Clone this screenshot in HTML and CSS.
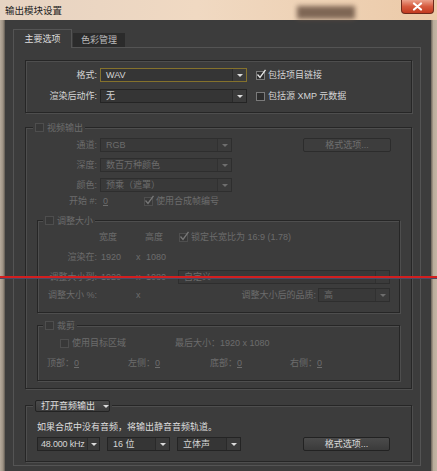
FILE: index.html
```html
<!DOCTYPE html>
<html>
<head>
<meta charset="utf-8">
<title>输出模块设置</title>
<link rel="stylesheet" href="styles.css">
</head>
<body>
<div class="titlebar">
  <span class="title">输出模块设置</span>
  <span class="smudge"></span>
  <span class="close"><svg width="11" height="9" viewBox="0 0 11 9"><path d="M2 1.5 L9 7.5 M9 1.5 L2 7.5" stroke="#fff" stroke-width="2.2" stroke-linecap="round"/></svg></span>
</div>
<div class="window">
  <div class="frame-l"></div>
  <div class="client">
    <div class="tabs">
      <div class="tab active">主要选项</div>
      <div class="tab">色彩管理</div>
    </div>
    <div class="panel">
      <div class="group g1">
        <div class="row">
          <span class="lbl l71">格式:</span>
          <div class="select focus s147"><span class="val">WAV</span><span class="drop"><i></i></span></div>
          <span class="chk ml9"><i class="box"><svg width="11" height="11" viewBox="0 0 11 11"><path d="M1.5 5.5 L4 8.5 L9.5 0.8" fill="none" stroke="#e8e8e8" stroke-width="1.3"/></svg></i>包括项目链接</span>
        </div>
        <div class="row mt7">
          <span class="lbl l71">渲染后动作:</span>
          <div class="select s147"><span class="val">无</span><span class="drop"><i></i></span></div>
          <span class="chk ml9"><i class="box"></i>包括源 XMP 元数据</span>
        </div>
      </div>

      <div class="group g2 dis">
        <div class="legend lg-v"><span class="chk"><i class="box"></i>视频输出</span></div>
        <div class="row mt5">
          <span class="lbl l71">通道:</span>
          <div class="select s132"><span class="val">RGB</span><span class="drop"><i></i></span></div>
          <div class="btn b88 ml71">格式选项...</div>
        </div>
        <div class="row mt6">
          <span class="lbl l71">深度:</span>
          <div class="select s132"><span class="val">数百万种颜色</span><span class="drop"><i></i></span></div>
        </div>
        <div class="row mt6">
          <span class="lbl l71">颜色:</span>
          <div class="select s132"><span class="val">预乘（遮罩）</span><span class="drop"><i></i></span></div>
        </div>
        <div class="row mt2">
          <span class="lbl l71">开始 #:</span>
          <span class="ul ml6">0</span>
          <span class="chk ml36"><i class="box"><svg width="11" height="11" viewBox="0 0 11 11"><path d="M1.5 5.5 L4 8.5 L9.5 0.8" fill="none" stroke="#787878" stroke-width="1.3"/></svg></i>使用合成帧编号</span>
        </div>

        <div class="group sub resize">
          <div class="legend lg-s"><span class="chk"><i class="box"></i>调整大小</span></div>
          <div class="row h12 mt5">
            <span class="hd ml61">宽度</span>
            <span class="hd ml28">高度</span>
            <span class="chk ml16"><i class="box"><svg width="11" height="11" viewBox="0 0 11 11"><path d="M1.5 5.5 L4 8.5 L9.5 0.8" fill="none" stroke="#787878" stroke-width="1.3"/></svg></i>锁定长宽比为 16:9 (1.78)</span>
          </div>
          <div class="row h12 mt8">
            <span class="lbl l59">渲染在:</span>
            <span class="n1">1920</span><span class="nx">x</span><span>1080</span>
          </div>
          <div class="row mt7 pr9">
            <span class="lbl l59">调整大小到:</span>
            <span class="n1">1920</span><span class="nx">x</span><span class="n2">1080</span>
            <div class="select grow"><span class="val">自定义</span><span class="drop"><i></i></span></div>
          </div>
          <div class="row mt4 pr9">
            <span class="lbl l59">调整大小 %:</span>
            <span class="n1"></span><span class="nx">x</span>
            <span class="lbl push">调整大小后的品质:</span>
            <div class="select s72 ml2"><span class="val">高</span><span class="drop"><i></i></span></div>
          </div>
        </div>

        <div class="group sub crop">
          <div class="legend lg-s"><span class="chk"><i class="box"></i>裁剪</span></div>
          <div class="row h12 mt6">
            <span class="chk ml22 w115"><i class="box"></i>使用目标区域</span>
            <span>最后大小：1920 x 1080</span>
          </div>
          <div class="row h12 mt8">
            <span class="cp ml9 w81">顶部：<span class="ul">0</span></span>
            <span class="cp w82">左侧：<span class="ul">0</span></span>
            <span class="cp w80">底部：<span class="ul">0</span></span>
            <span class="cp">右侧：<span class="ul">0</span></span>
          </div>
        </div>
      </div>

      <div class="group g3">
        <div class="legend lg-v"><div class="menubtn">打开音频输出<i></i></div></div>
        <div class="note">如果合成中没有音频，将输出静音音频轨道。</div>
        <div class="row mt4">
          <div class="select s63 ml11 tight"><span class="val">48.000 kHz</span><span class="drop"><i></i></span></div>
          <div class="select s63 ml7"><span class="val">16 位</span><span class="drop"><i></i></span></div>
          <div class="select s64 ml7"><span class="val">立体声</span><span class="drop"><i></i></span></div>
          <div class="btn b87 push mr21">格式选项...</div>
        </div>
      </div>
    </div>
  </div>
  <div class="frame-r"></div>
</div>
<div class="redline"></div>
</body>
</html>
```

FILE: styles.css
```css
* { box-sizing: border-box; margin: 0; padding: 0; }
html, body { width: 437px; height: 471px; overflow: hidden; }
body {
  background: #a99e91;
  font-family: "Liberation Sans", "Noto Sans CJK SC", sans-serif;
  font-size: 9px;
  line-height: 12px;
  color: #d6d6d6;
  position: relative;
}

/* title bar */
.titlebar {
  height: 20px;
  display: flex;
  align-items: flex-start;
  background: linear-gradient(90deg, #e6d3c2 0%, #f0d9c2 45%, #eccaa8 100%);
  position: relative;
}
.title {
  font-family: "Noto Sans CJK SC", sans-serif;
  font-size: 9.5px;
  color: #1e1e1e;
  margin: 4px 0 0 5px;
  line-height: 12px;
}
.smudge {
  position: absolute;
  left: 297px; top: 6px;
  width: 58px; height: 13px;
  background: #6b5444;
  filter: blur(2.5px);
  opacity: .85;
}
.close {
  margin-left: auto;
  margin-right: 3px;
  width: 33px;
  height: 14px;
  background: linear-gradient(#eba08a, #d65a3e 50%, #c23a20);
  border: 1px solid #6e2a1c;
  border-top: 0;
  border-radius: 0 0 4px 4px;
  display: flex;
  align-items: center;
  justify-content: center;
}

/* window frame */
.window { display: flex; height: 451px; }
.frame-l { width: 5px; background: linear-gradient(90deg, #b7ab9c, #9d9284 60%, #5e5850); }
.client { width: 426px; background: #3c3c3c; padding: 0 10px 0 8px; }
.frame-r { flex: 1; background: linear-gradient(90deg, #6a6258, #b9ac9b 40%, #c3b5a3); }

/* tabs */
.tabs { display: flex; align-items: flex-end; height: 18px; margin-top: 9px; }
.tab {
  height: 14px;
  width: 52px;
  margin-left: 1px;
  background: #2b2b2b;
  color: #bcbcbc;
  display: flex;
  align-items: center;
  justify-content: center;
  font-family: "Noto Sans CJK SC", sans-serif;
}
.tab.active {
  height: 19px;
  width: 59px;
  margin: 0 0 -1px 0;
  background: #3c3c3c;
  color: #dedede;
  border: 1px solid #545454;
  border-bottom: 0;
  position: relative;
  z-index: 1;
}

.panel {
  border: 1px solid #545454;
  height: 419px;
  padding: 12px 8px 0 11px;
}

/* group boxes */
.group {
  border: 1px solid #262626;
  box-shadow: 1px 1px 0 #4e4e4e, inset 1px 1px 0 #4e4e4e;
}
.g1 { height: 53px; padding-top: 7px; }
.g2 { margin-top: 14px; height: 262px; }
.g3 { margin-top: 16px; height: 57px; }
.sub { margin: 12px 11px 0 11px; }
.resize { height: 93px; }
.crop { height: 56px; }

.legend {
  display: flex;
  align-items: center;
  width: fit-content;
  height: 11px;
  margin-top: -6px;
  padding: 0 2px;
  background: #3c3c3c;
}
.lg-v { margin-left: 7px; }
.lg-s { margin-left: 5px; }
.g3 .legend { height: 12px; }

/* rows */
.row { display: flex; align-items: center; height: 14px; white-space: nowrap; }
.h12 { height: 12px; }
.lbl { text-align: right; flex: none; white-space: nowrap; }
.l71 { width: 71px; }
.l59 { width: 59px; }
.push { margin-left: auto; }
.pr9 { padding-right: 9px; }

.mt2 { margin-top: 2px; } .mt4 { margin-top: 4px; } .mt5 { margin-top: 5px; }
.mt6 { margin-top: 6px; } .mt7 { margin-top: 7px; } .mt8 { margin-top: 8px; }
.ml2 { margin-left: 2px; } .ml6 { margin-left: 6px; } .ml7 { margin-left: 7px; }
.ml9 { margin-left: 9px; } .ml11 { margin-left: 11px; } .ml16 { margin-left: 16px; }
.ml22 { margin-left: 22px; } .ml28 { margin-left: 28px; } .ml36 { margin-left: 36px; }
.ml61 { margin-left: 61px; } .ml71 { margin-left: 71px; }
.mr21 { margin-right: 21px; }
.w115 { width: 115px; } .w81 { width: 81px; } .w82 { width: 82px; } .w80 { width: 80px; }

.n1 { margin-left: 4px; width: 35px; }
.nx { width: 10px; }
.n2 { width: 32px; }
.hd { width: 18px; text-align: center; }
.ul { text-decoration: underline; text-underline-offset: 1px; }

/* select */
.select {
  display: flex;
  height: 14px;
  border: 1px solid #242424;
  background: #353535;
  flex: none;
  margin-left: 3px;
}
.select.ml2 { margin-left: 2px; }
.select.ml7 { margin-left: 7px; }
.select.ml11 { margin-left: 11px; }
.select .val { flex: 1; padding-left: 5px; line-height: 12px; white-space: nowrap; overflow: hidden; }
.select.tight .val { padding-left: 3px; letter-spacing: -0.2px; }
.select .drop {
  width: 14px;
  flex: none;
  border-left: 1px solid #2a2a2a;
  background: #3b3b3b;
  display: flex;
  align-items: center;
  justify-content: center;
}
.select.tight .drop { width: 12px; }
.select .drop i {
  display: block;
  border-left: 3px solid transparent;
  border-right: 3px solid transparent;
  border-top: 3px solid #dcdcdc;
}
.select.focus { border-color: #85722c; }
.s147 { width: 147px; }
.s132 { width: 132px; }
.s72 { width: 72px; }
.s63 { width: 63px; }
.s64 { width: 64px; }
.grow { flex: 1; margin-left: 0; }

/* checkbox */
.chk { display: flex; align-items: center; white-space: nowrap; flex: none; }
.box {
  width: 9px;
  height: 9px;
  border: 1px solid #7a7a7a;
  background: #2d2d2d;
  margin-right: 3px;
  position: relative;
  flex: none;
}
.box svg { position: absolute; left: -1px; top: -3px; }

/* buttons */
.btn {
  height: 14px;
  border: 1px solid #222;
  border-radius: 2px;
  background: linear-gradient(#4b4b4b, #3b3b3b);
  display: flex;
  align-items: center;
  justify-content: center;
  color: #dcdcdc;
  flex: none;
}
.b88 { width: 88px; }
.b87 { width: 87px; }
.menubtn {
  height: 12px;
  width: 75px;
  border: 1px solid #232323;
  border-radius: 2px;
  background: linear-gradient(#4a4a4a, #3c3c3c);
  display: flex;
  align-items: center;
  padding-left: 5px;
  color: #dcdcdc;
}
.menubtn i {
  display: block;
  margin-left: 8px;
  border-left: 3px solid transparent;
  border-right: 3px solid transparent;
  border-top: 3px solid #dcdcdc;
}
.note { margin: 9px 0 0 11px; height: 12px; color: #dedede; }

/* disabled video area */
.dis { color: #6c6c6c; }
.dis .select { border-color: #2e2e2e; background: #393939; }
.dis .select .drop { background: #3b3b3b; border-left-color: #313131; }
.dis .select .drop i { border-top-color: #6e6e6e; }
.dis .box { border-color: #4e4e4e; background: #383838; }
.dis .btn { color: #707070; background: #3d3d3d; border-color: #2c2c2c; }

/* red guide line in screenshot */
.redline {
  position: absolute;
  left: 0; top: 276px;
  width: 437px; height: 2px;
  background: #d21f1f;
  box-shadow: 0 1px 0 #4a4a66;
}
```
